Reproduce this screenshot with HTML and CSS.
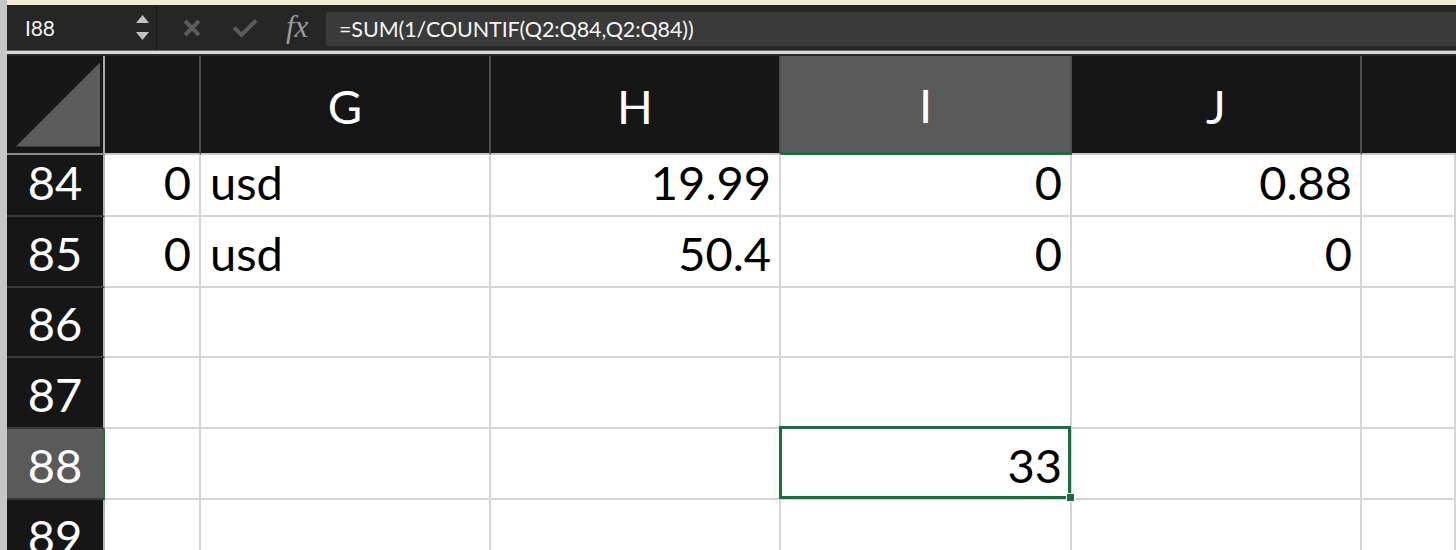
FILE: index.html
```html
<!DOCTYPE html>
<html>
<head>
<meta charset="utf-8">
<link rel="stylesheet" href="styles.css">
</head>
<body>
<div class="app">
  <div class="edge"></div>
  <div class="main">
    <div class="topstrip"></div>
    <div class="fbar">
      <div class="namebox">
        <span class="ref">I88</span>
        <span class="spin">
          <svg width="13" height="8" viewBox="0 0 13 8"><polygon points="6.5,0 13,8 0,8" fill="#c2c2c2"/></svg>
          <svg width="13" height="8" viewBox="0 0 13 8"><polygon points="0,0 13,0 6.5,8" fill="#c2c2c2"/></svg>
        </span>
      </div>
      <div class="fbtns">
        <svg class="ico-x" width="20" height="20" viewBox="0 0 20 20"><path d="M3 3 L17 17 M17 3 L3 17" stroke="#5b5b5b" stroke-width="4" stroke-linecap="butt"/></svg>
        <svg class="ico-ok" width="26" height="20" viewBox="0 0 26 20"><path d="M2 9.5 L9.5 17 L24 2.5" stroke="#5b5b5b" stroke-width="4" fill="none"/></svg>
        <span class="fx">fx</span>
      </div>
      <div class="finput">=SUM(1/COUNTIF(Q2:Q84,Q2:Q84))</div>
    </div>
    <div class="sep"></div>
    <div class="sheet">
      <div class="corner"><svg width="87" height="87" viewBox="0 0 87 87"><polygon points="87,0 87,87 0,87" fill="#5c5c5c"/></svg></div>
      <div class="ch"></div>
      <div class="ch">G</div>
      <div class="ch">H</div>
      <div class="ch ch-sel">I</div>
      <div class="ch">J</div>
      <div class="ch ch-last"></div>

      <div class="rh">84</div>
      <div class="c num">0</div>
      <div class="c">usd</div>
      <div class="c num">19.99</div>
      <div class="c num">0</div>
      <div class="c num">0.88</div>
      <div class="c"></div>

      <div class="rh">85</div>
      <div class="c num">0</div>
      <div class="c">usd</div>
      <div class="c num">50.4</div>
      <div class="c num">0</div>
      <div class="c num">0</div>
      <div class="c"></div>

      <div class="rh">86</div>
      <div class="c"></div><div class="c"></div><div class="c"></div><div class="c"></div><div class="c"></div><div class="c"></div>

      <div class="rh">87</div>
      <div class="c"></div><div class="c"></div><div class="c"></div><div class="c"></div><div class="c"></div><div class="c"></div>

      <div class="rh rh-sel">88</div>
      <div class="c"></div><div class="c"></div><div class="c"></div>
      <div class="c num active">33</div>
      <div class="c"></div><div class="c"></div>

      <div class="rh">89</div>
      <div class="c"></div><div class="c"></div><div class="c"></div><div class="c"></div><div class="c"></div><div class="c"></div>
    </div>
  </div>
</div>
</body>
</html>
```

FILE: styles.css
```css
html, body {
  margin: 0;
  padding: 0;
  height: 550px;
  overflow: hidden;
  background: #ffffff;
}

.app {
  display: flex;
  height: 550px;
  font-family: Lato, "Open Sans", sans-serif;
}

.edge {
  width: 7px;
  flex: none;
  background: #c6c6c6;
}

.main {
  flex: 1;
  display: flex;
  flex-direction: column;
  min-width: 0;
  overflow: hidden;
}

.topstrip {
  flex: none;
  height: 5px;
  background: #f4ebd6;
}

.fbar {
  flex: none;
  height: 45px;
  background: #262626;
  display: flex;
  align-items: stretch;
}

.namebox {
  width: 150px;
  flex: none;
  display: flex;
  align-items: center;
  justify-content: space-between;
  padding: 0 7px 0 18px;
  box-sizing: border-box;
  border-right: 1px solid #171717;
}

.ref {
  color: #f2f2f2;
  font-size: 21px;
  letter-spacing: -0.2px;
}

.spin {
  display: flex;
  flex-direction: column;
  gap: 9px;
}

.spin svg {
  display: block;
}

.fbtns {
  width: 169px;
  flex: none;
  display: flex;
  align-items: center;
  box-sizing: border-box;
  padding-left: 25px;
}

.ico-x {
  display: block;
}

.ico-ok {
  display: block;
  margin-left: 30px;
}

.fx {
  margin-left: 28px;
  font-family: "Liberation Serif", serif;
  font-style: italic;
  font-size: 31px;
  color: #9a9a9a;
  line-height: 1;
  margin-top: -3px;
}

.finput {
  flex: 1;
  margin: 7px 0 4px 0;
  background: #3a3a3a;
  color: #f4f4f4;
  font-size: 21.5px;
  display: flex;
  align-items: center;
  padding-left: 13px;
  letter-spacing: -0.1px;
  border-radius: 2px 0 0 2px;
}

.sep {
  flex: none;
  height: 6px;
  box-sizing: border-box;
  border-top: 1px solid #6a6a6a;
  border-bottom: 2px solid #2a2a2a;
  background: #dadada;
}

.sheet {
  flex: none;
  display: grid;
  grid-template-columns: 98px 96px 290px 290px 291px 290px 1fr;
  grid-template-rows: 99px 62px 71px 70px 71px 71px 71px;
  font-size: 47px;
  line-height: 1;
  color: #000;
}

.corner {
  background: #161616;
  box-sizing: border-box;
  border-right: 2px solid #a9a9a9;
  border-bottom: 2px solid #8a8a8a;
  display: flex;
  align-items: flex-end;
  padding: 0 3px 5px 9px;
}

.corner svg {
  display: block;
}

.ch {
  background: #161616;
  color: #fff;
  box-sizing: border-box;
  border-right: 2px solid #4d4d4d;
  border-bottom: 2px solid #c9c9c9;
  display: flex;
  align-items: center;
  justify-content: center;
  padding-top: 3px;
}

.ch-sel {
  background: #5a5a5a;
  border-bottom: 3px solid #1e6e40;
}

.ch-last {
  border-right: none;
}

.rh {
  background: #161616;
  color: #fff;
  box-sizing: border-box;
  border-right: 2px solid #b3b3b3;
  border-bottom: 2px solid #383838;
  display: flex;
  align-items: flex-end;
  justify-content: center;
  padding-bottom: 9px;
}

.rh-sel {
  background: #5a5a5a;
  border-right: 2px solid #1e6e40;
}

.c {
  box-sizing: border-box;
  border-right: 2px solid #d4d4d4;
  border-bottom: 2px solid #d4d4d4;
  display: flex;
  align-items: flex-end;
  padding: 0 8px 9px 9px;
}

.num {
  justify-content: flex-end;
}

.active {
  position: relative;
}

.active::before {
  content: "";
  position: absolute;
  top: -3px;
  left: -2px;
  right: -1px;
  bottom: -1px;
  border: 3px solid #1e6b3f;
  pointer-events: none;
}

.active::after {
  content: "";
  position: absolute;
  right: -5px;
  bottom: -4px;
  width: 7px;
  height: 7px;
  background: #1e6b3f;
  border: 1px solid #ffffff;
}
```
